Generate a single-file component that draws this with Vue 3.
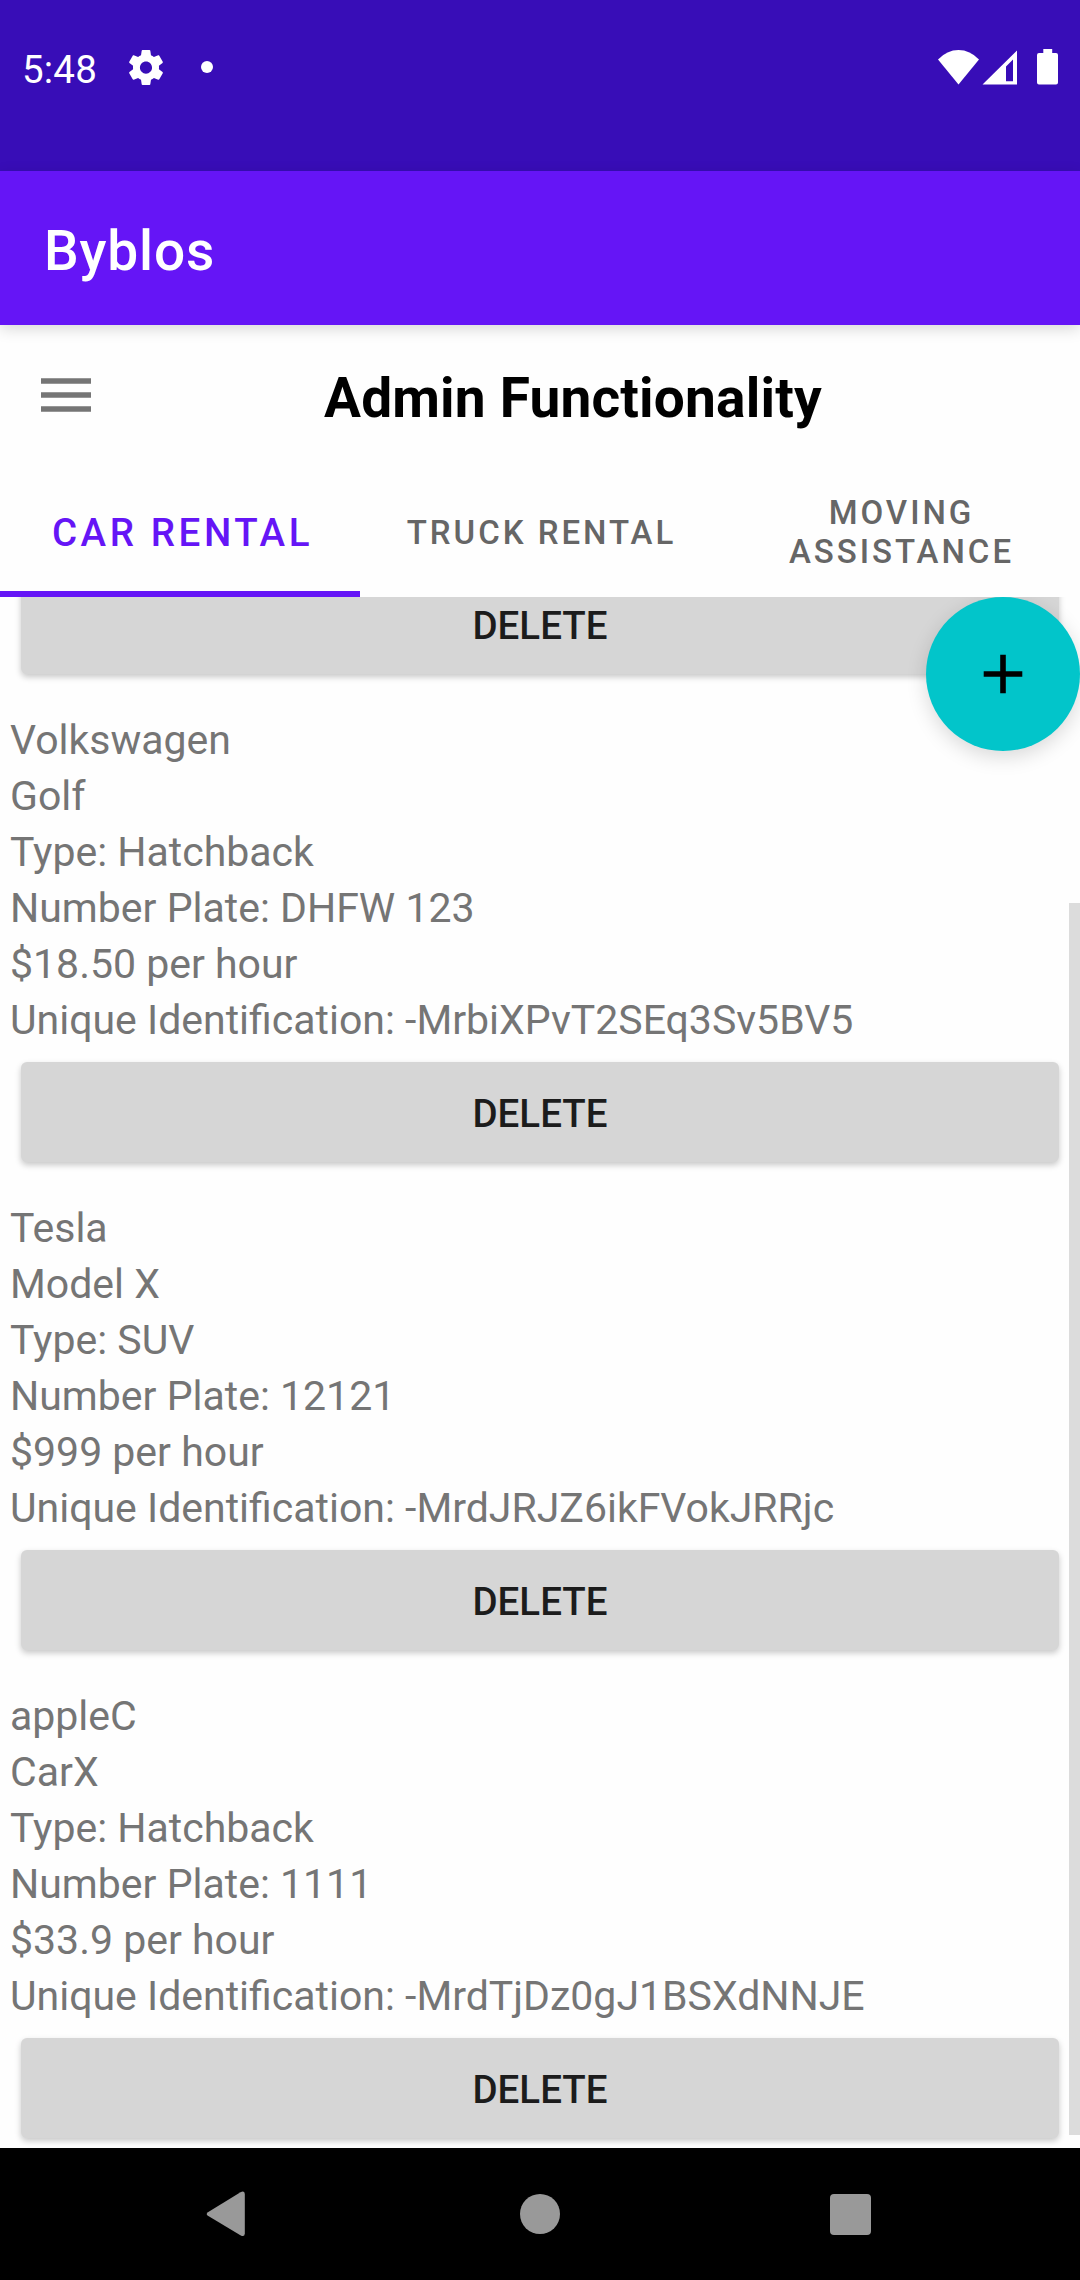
<script setup>
const tabs = [
  { lines: ['CAR RENTAL'], active: true },
  { lines: ['TRUCK RENTAL'], active: false },
  { lines: ['MOVING', 'ASSISTANCE'], active: false },
]

const cars = [
  { make: 'Volkswagen', model: 'Golf', type: 'Hatchback', plate: 'DHFW 123', price: '18.50', id: '-MrbiXPvT2SEq3Sv5BV5' },
  { make: 'Tesla', model: 'Model X', type: 'SUV', plate: '12121', price: '999', id: '-MrdJRJZ6ikFVokJRRjc' },
  { make: 'appleC', model: 'CarX', type: 'Hatchback', plate: '1111', price: '33.9', id: '-MrdTjDz0gJ1BSXdNNJE' },
]
</script>

<template>
  <div class="screen">
    <header class="status">
      <span class="clock">5:48</span>
      <svg class="gear" viewBox="2.2 2 19.6 20" preserveAspectRatio="none">
        <path fill-rule="evenodd" d="M19.43 12.98c.04-.32.07-.64.07-.98s-.03-.66-.07-.98l2.11-1.65c.19-.15.24-.42.12-.64l-2-3.46c-.12-.22-.39-.3-.61-.22l-2.49 1c-.52-.4-1.08-.73-1.69-.98l-.38-2.65C14.46 2.18 14.25 2 14 2h-4c-.25 0-.46.18-.49.42l-.38 2.65c-.61.25-1.17.59-1.69.98l-2.49-1c-.23-.09-.49 0-.61.22l-2 3.46c-.13.22-.07.49.12.64l2.11 1.65c-.04.32-.07.65-.07.98s.03.66.07.98l-2.11 1.65c-.19.15-.24.42-.12.64l2 3.46c.12.22.39.3.61.22l2.49-1c.52.4 1.08.73 1.69.98l.38 2.65c.03.24.24.42.49.42h4c.25 0 .46-.18.49-.42l.38-2.65c.61-.25 1.17-.59 1.69-.98l2.49 1c.23.09.49 0 .61-.22l2-3.46c.12-.22.07-.49-.12-.64l-2.11-1.65zM12 15.5c-1.93 0-3.5-1.57-3.5-3.5s1.57-3.5 3.5-3.5 3.5 1.57 3.5 3.5-1.57 3.5-3.5 3.5z" />
      </svg>
      <i class="dot"></i>
      <svg class="signals" width="122" height="38" viewBox="937 48 122 38">
        <path d="M958.5 84.5 938 59.5Q947 50 958.5 50T979 59.5Z" />
        <path fill-rule="evenodd" d="M1017 50.5V84.5H982.5ZM1013 59.5 1006 66.5V81.2H1013Z" />
        <path d="M1043.3 49H1052.2V53H1056Q1058 53 1058 55V82.5Q1058 84.5 1056 84.5H1039Q1037 84.5 1037 82.5V55Q1037 53 1039 53H1043.3Z" />
      </svg>
    </header>

    <div class="appbar">Byblos</div>

    <section class="heading">
      <svg class="menu" width="50" height="34" viewBox="0 0 50 34">
        <path d="M0 .2H50V5.8H0ZM0 14.2H50V19.8H0ZM0 28.2H50V33.8H0Z" />
      </svg>
      <h1>Admin Functionality</h1>
    </section>

    <nav class="tabs">
      <div v-for="tab in tabs" :key="tab.lines[0]" class="tab" :class="{ active: tab.active }">
        <span v-for="line in tab.lines" :key="line">{{ line }}</span>
      </div>
    </nav>

    <main class="list">
      <button class="delete first">DELETE</button>
      <article v-for="car in cars" :key="car.id" class="car">
        <p>{{ car.make }}</p>
        <p>{{ car.model }}</p>
        <p>Type: {{ car.type }}</p>
        <p>Number Plate: {{ car.plate }}</p>
        <p>${{ car.price }} per hour</p>
        <p>Unique Identification: {{ car.id }}</p>
        <button class="delete">DELETE</button>
      </article>
      <div class="fab">
        <svg width="40" height="40" viewBox="0 0 40 40"><path d="M17.2.7H22.8V17.2H39.3V22.8H22.8V39.3H17.2V22.8H.7V17.2H17.2Z" /></svg>
      </div>
      <div class="scrollbar"></div>
    </main>

    <footer class="navbar">
      <svg width="39" height="46" viewBox="0 0 39 46"><path d="M1.9 21.2 34.5 1.2Q38.5 -.6 38.8 3V42.8Q38.6 46.2 34.8 44.6L1.9 24.8Q-.5 23 1.9 21.2Z" /></svg>
      <i class="home"></i>
      <i class="recent"></i>
    </footer>
  </div>
</template>

<style>
body {
  margin: 0;
}
</style>

<style scoped>
.screen {
  width: 1080px;
  height: 2280px;
  display: flex;
  flex-direction: column;
  overflow: hidden;
  background: #fefefe;
  font-family: Roboto, sans-serif;
}
.status {
  height: 171px;
  flex: none;
  box-sizing: border-box;
  padding: 32px 21px 0 22px;
  display: flex;
  align-items: flex-start;
  background: #380db7;
  color: #fff;
}
.status svg {
  fill: #fff;
}
.clock {
  width: 107px;
  font-size: 38.5px;
  line-height: 75px;
  letter-spacing: 0.2px;
}
.gear {
  width: 34px;
  height: 35px;
  margin-top: 18px;
}
.dot {
  width: 12px;
  height: 12px;
  margin: 29px 0 0 38px;
  border-radius: 50%;
  background: #fff;
}
.signals {
  margin: 16px 0 0 auto;
}
.appbar {
  position: relative;
  z-index: 1;
  height: 154px;
  flex: none;
  box-sizing: border-box;
  padding-left: 44px;
  background: #6515f6;
  color: #fff;
  font-size: 55px;
  font-weight: 500;
  line-height: 160px;
  letter-spacing: 0.85px;
  box-shadow: 0 4px 14px rgba(0, 0, 0, 0.15);
}
.heading {
  height: 140px;
  flex: none;
  display: flex;
  align-items: flex-start;
  padding-left: 41px;
}
.menu {
  margin-top: 53px;
  fill: #757575;
}
h1 {
  margin: 0 0 0 233px;
  font-size: 55px;
  font-weight: 700;
  line-height: 146px;
  letter-spacing: 0.18px;
  color: #000;
  white-space: nowrap;
}
.tabs {
  height: 132px;
  flex: none;
  display: grid;
  grid-template-columns: repeat(3, 1fr);
}
.tab {
  box-sizing: border-box;
  display: flex;
  flex-direction: column;
  align-items: center;
  justify-content: center;
  padding: 2px 0 0 3px;
  color: #666;
  font-size: 33px;
  font-weight: 500;
  line-height: 39px;
  letter-spacing: 2.98px;
}
.tab.active {
  padding: 9px 0 0 5px;
  border-bottom: 6px solid #6515f6;
  color: #6515f6;
  font-size: 38.5px;
  letter-spacing: 3.6px;
}
.list {
  position: relative;
  height: 1551px;
  flex: none;
  overflow: hidden;
}
.delete {
  display: block;
  box-sizing: border-box;
  width: 1038px;
  height: 100px;
  margin: 14px 0 0 11px;
  padding: 3px 0 0;
  border: 0;
  border-radius: 6px;
  background: #d6d6d6;
  color: #1c1c1c;
  font-family: inherit;
  font-size: 38.5px;
  font-weight: 500;
  line-height: 97px;
  text-align: center;
  box-shadow: 0 3px 6px rgba(0, 0, 0, 0.22);
}
.delete.first {
  margin: -23px 0 0 21px;
}
.car {
  margin-top: 38px;
  padding-left: 10px;
}
.car p {
  margin: 0;
  color: #757575;
  font-size: 41px;
  line-height: 56px;
  white-space: nowrap;
}
.fab {
  position: absolute;
  top: 0;
  right: 0;
  width: 154px;
  height: 154px;
  display: flex;
  align-items: center;
  justify-content: center;
  border-radius: 50%;
  background: #02c5ca;
  box-shadow: 0 6px 20px rgba(0, 0, 0, 0.15);
}
.scrollbar {
  position: absolute;
  top: 306px;
  right: 0;
  width: 11px;
  height: 1232px;
  background: #dcdcdc;
}
.navbar {
  height: 132px;
  flex: none;
  display: flex;
  align-items: flex-start;
  padding-left: 206px;
  background: #000;
}
.navbar svg {
  margin-top: 43px;
  fill: #999;
}
.home {
  width: 40px;
  height: 40px;
  margin: 46px 0 0 275px;
  border-radius: 50%;
  background: #999;
}
.recent {
  width: 41px;
  height: 41px;
  margin: 46px 0 0 270px;
  border-radius: 4px;
  background: #999;
}
</style>
